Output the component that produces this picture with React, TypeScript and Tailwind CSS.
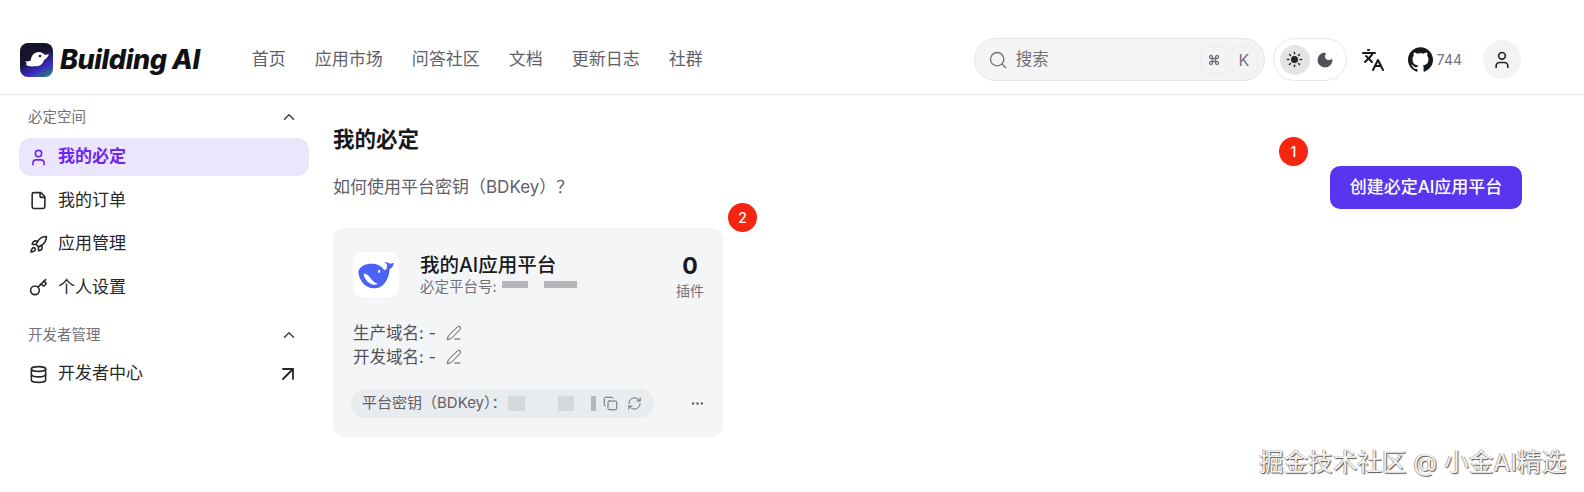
import { ArrowUpRight, ChevronUp, Command, Copy, Database, Ellipsis, File, Key, Languages, Moon, PenLine, RefreshCw, Rocket, Search, Sun, User } from "lucide-react";
import { SiGithub } from "react-icons/si";

const FONT = "font-['Inter','Noto_Sans_CJK_SC',sans-serif]";

const NAV = ["首页", "应用市场", "问答社区", "文档", "更新日志", "社群"];

const SPACE_ITEMS = [
  { label: "我的必定", icon: User, active: true },
  { label: "我的订单", icon: File },
  { label: "应用管理", icon: Rocket },
  { label: "个人设置", icon: Key },
];

function Logo() {
  return (
    <svg width="33" height="34" viewBox="0 0 33 34" className="shrink-0">
      <defs>
        <linearGradient id="lg" x1="0.2" y1="0" x2="0.7" y2="1">
          <stop offset="0.4" stopColor="#14142a" />
          <stop offset="0.78" stopColor="#3a2bc4" />
          <stop offset="1" stopColor="#2f6f86" />
        </linearGradient>
      </defs>
      <rect width="33" height="34" rx="8" fill="url(#lg)" />
      <path d="M5 18c3 1 5 0 6-1 0-4 3-8 8-8 3 0 5 2 6 3 2 0 3-1 4-1-1 3-3 5-5 6-1 4-5 7-9 6-3 1-7 0-9-1 1-1 1-2-1-4z" fill="#fff" />
      <circle cx="20" cy="13" r="1.3" fill="#14142a" />
    </svg>
  );
}

function Whale() {
  return (
    <svg width="38" height="29" viewBox="0 0 36 28">
      <path d="M1 10C3 4 10 2 17 3c4 .5 7 3 9 6 2 0 3-2 2.500-6L26 1c3 0 5 1 6 2 1-1 2-1 3-1 0 3-2 5-4 6 0 6-3 14-9 17-6 3-13 1-17-4C2 17 1 13 1 10z" fill="#4a62f5" />
      <path d="M6 12c3 0 6 3 7 5s5 5 7 5c-4 2-8 0-10-2-2-2-4-5-4-8z" fill="#fff" />
      <ellipse cx="21" cy="10" rx="1.100" ry="1.500" fill="#fff" />
    </svg>
  );
}

function SectionTitle({ label }: { label: string }) {
  return (
    <div className="flex items-center justify-between pl-[9px] pr-[11px] text-[14.5px] text-[#71717a]">
      <span>{label}</span>
      <ChevronUp size={18} strokeWidth={2} className="text-[#3f3f46]" />
    </div>
  );
}

function Header() {
  return (
    <header className="flex h-[95px] items-center border-b border-[#e8e8ea] pl-[20px] pr-[63px] pt-[25px]">
      <Logo />
      <span className="ml-[7px] mt-[2px] text-[27px] font-extrabold italic tracking-[-0.4px] text-[#111114]">Building AI</span>
      <nav className="ml-[52px] mt-[1px] flex gap-[29px] text-[17px] text-[#60606a]">
        {NAV.map((n) => <span key={n}>{n}</span>)}
      </nav>

      <div className="ml-auto flex h-[43px] w-[291px] items-center rounded-full border border-[#e6e6e8] bg-[#f4f4f5] pl-[13px] pr-[6px] text-[#71717a]">
        <Search size={20} strokeWidth={1.6} />
        <span className="ml-[8px] text-[16.500px]">搜索</span>
        <span className="ml-auto flex h-[28px] w-[28px] items-center justify-center rounded-[8px] border border-[#ececee] bg-[#f4f4f5]">
          <Command size={12} strokeWidth={2.6} />
        </span>
        <span className="ml-[2px] flex h-[28px] w-[28px] items-center justify-center rounded-[8px] border border-[#ececee] text-[16px]">K</span>
      </div>

      <div className="ml-[8px] flex h-[43px] w-[74px] items-center rounded-full border border-[#e8e8ea] pl-[6px]">
        <span className="flex h-[30px] w-[30px] items-center justify-center rounded-full bg-[#e4e4e7] text-[#27272a]">
          <Sun size={17} strokeWidth={2} fill="currentColor" />
        </span>
        <Moon size={18} strokeWidth={2} fill="currentColor" className="ml-[6px] text-[#52525b]" />
      </div>

      <Languages size={24} strokeWidth={2} className="ml-[14px] text-[#18181b]" />
      <SiGithub size={25} className="ml-[23px] text-[#18181b]" />
      <span className="ml-[4px] text-[14px] text-[#71717a]">744</span>
      <span className="ml-[21px] flex h-[39px] w-[38px] items-center justify-center rounded-full bg-[#f4f4f5] text-[#27272a]">
        <User size={20} strokeWidth={2} />
      </span>
    </header>
  );
}

function Sidebar() {
  return (
    <aside className="w-[333px] shrink-0 pl-[19px] pr-[24px] pt-[11px]">
      <SectionTitle label="必定空间" />
      <ul className="mt-[10px] flex flex-col gap-[5px]">
        {SPACE_ITEMS.map((it) => (
          <li
            key={it.label}
            className={
              it.active
                ? "flex h-[38.500px] items-center gap-[10px] rounded-[12px] bg-[#ebe6fd] pl-[10px] text-[17px] font-semibold text-[#6d28f0]"
                : "flex h-[38.500px] items-center gap-[10px] pl-[10px] text-[17px] text-[#27272a]"
            }
          >
            <it.icon size={19} strokeWidth={2} />
            {it.label}
          </li>
        ))}
      </ul>
      <div className="mt-[17px]">
        <SectionTitle label="开发者管理" />
      </div>
      <div className="mt-[9px] flex h-[39px] items-center gap-[10px] pl-[10px] pr-[9px] text-[17px] text-[#27272a]">
        <Database size={19} strokeWidth={2} />
        开发者中心
        <ArrowUpRight size={24} strokeWidth={1.8} className="ml-auto" />
      </div>
    </aside>
  );
}

function Card() {
  return (
    <div className="relative mt-[19px] w-[390px] rounded-[12px] bg-[#f3f5f7] px-[20px] pb-[19px] pt-[24px]">
      <span className="absolute right-[-34px] top-[-25px] flex h-[29px] w-[29px] items-center justify-center rounded-full bg-[#f5260f] text-[14px] font-medium text-white">2</span>
      <div className="flex items-start">
        <span className="flex h-[46px] w-[46px] items-center justify-center rounded-[10px] bg-white"><Whale /></span>
        <div className="ml-[21px]">
          <div className="text-[19.500px] font-medium leading-[26px] text-[#18181b]">我的AI应用平台</div>
          <div className="flex items-start text-[14.500px] leading-[18px] text-[#71717a]">
            必定平台号:
            <span className="ml-[5px] mt-[3px] h-[7px] w-[26px] bg-[#b4b6ba] blur-[0.6px]" />
            <span className="ml-[16px] mt-[3px] h-[7px] w-[33px] bg-[#b4b6ba] blur-[0.6px]" />
          </div>
        </div>
        <div className="ml-auto mr-[-1px] flex flex-col items-center">
          <span className="text-[23px] font-bold leading-[28px] text-[#18181b]">0</span>
          <span className="mt-[1px] text-[14px] leading-[20px] text-[#71717a]">插件</span>
        </div>
      </div>
      <div className="mt-[20px] text-[16.500px] leading-[24px] text-[#52525b]">
        <div className="flex items-center">生产域名: - <PenLine size={16} strokeWidth={1.5} className="ml-[10px]" /></div>
        <div className="flex items-center">开发域名: - <PenLine size={16} strokeWidth={1.5} className="ml-[10px]" /></div>
      </div>
      <div className="mt-[20px] flex items-center">
        <div className="ml-[-2px] flex h-[29px] w-[303px] items-center rounded-full bg-[#e9ecef] pl-[11px] text-[15px] text-[#60606a]">
          平台密钥（BDKey）：
          <span className="ml-[1px] h-[15px] w-[17px] bg-[#d6d9dc] blur-[0.6px]" />
          <span className="ml-[33px] h-[15px] w-[16px] bg-[#d6d9dc] blur-[0.6px]" />
          <span className="ml-[17px] h-[15px] w-[5px] bg-[#b4b6ba] blur-[0.6px]" />
          <Copy size={15} strokeWidth={1.5} className="ml-[7px]" />
          <RefreshCw size={15} strokeWidth={1.5} className="ml-[9px]" />
        </div>
        <Ellipsis size={15} className="ml-auto mr-[-2px] text-[#60606a]" />
      </div>
    </div>
  );
}

function Main() {
  return (
    <main className="min-w-0 flex-1 pr-[62px] pt-[29px]">
      <h1 className="text-[21.500px] font-semibold leading-[30px] text-[#18181b]">我的必定</h1>
      <div className="mt-[12px] flex items-center justify-between">
        <p className="text-[17px] text-[#60606a]">如何使用平台密钥（BDKey）？</p>
        <div className="relative">
          <span className="absolute left-[-51px] top-[-29px] flex h-[29px] w-[29px] items-center justify-center rounded-full bg-[#f5260f] text-[14px] font-medium text-white">1</span>
          <button className="flex h-[43px] w-[192px] items-center justify-center rounded-[10px] bg-[#5a35f0] text-[17px] font-medium text-white">创建必定AI应用平台</button>
        </div>
      </div>
      <Card />
    </main>
  );
}

export default function App() {
  return (
    <div className={`relative h-[492px] w-[1584px] overflow-hidden bg-white ${FONT}`}>
      <Header />
      <div className="flex">
        <Sidebar />
        <Main />
      </div>
      {/* watermark burned into the screenshot */}
      <span className="absolute bottom-[15px] right-[18px] text-[24.600px] leading-[30px] text-[#f2f2f2] [text-shadow:1px_1px_1px_#555,-0.5px_-0.5px_0.5px_#777]">掘金技术社区 @ 小金AI精选</span>
    </div>
  );
}
